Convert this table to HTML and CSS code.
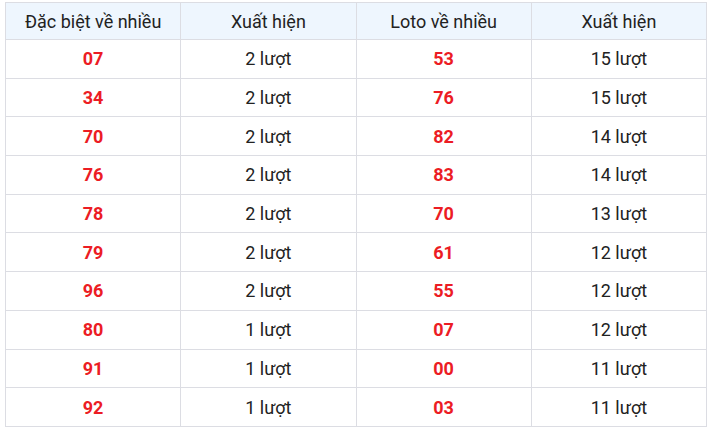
FILE: index.html
```html
<!DOCTYPE html>
<html lang="vi">
<head>
<meta charset="utf-8">
<link rel="stylesheet" href="styles.css">
</head>
<body>
<table class="stats">
  <thead>
    <tr><th>Đặc biệt về nhiều</th><th>Xuất hiện</th><th>Loto về nhiều</th><th>Xuất hiện</th></tr>
  </thead>
  <tbody>
    <tr><td class="num">07</td><td>2 lượt</td><td class="num">53</td><td>15 lượt</td></tr>
    <tr><td class="num">34</td><td>2 lượt</td><td class="num">76</td><td>15 lượt</td></tr>
    <tr><td class="num">70</td><td>2 lượt</td><td class="num">82</td><td>14 lượt</td></tr>
    <tr><td class="num">76</td><td>2 lượt</td><td class="num">83</td><td>14 lượt</td></tr>
    <tr><td class="num">78</td><td>2 lượt</td><td class="num">70</td><td>13 lượt</td></tr>
    <tr><td class="num">79</td><td>2 lượt</td><td class="num">61</td><td>12 lượt</td></tr>
    <tr><td class="num">96</td><td>2 lượt</td><td class="num">55</td><td>12 lượt</td></tr>
    <tr><td class="num">80</td><td>1 lượt</td><td class="num">07</td><td>12 lượt</td></tr>
    <tr><td class="num">91</td><td>1 lượt</td><td class="num">00</td><td>11 lượt</td></tr>
    <tr><td class="num">92</td><td>1 lượt</td><td class="num">03</td><td>11 lượt</td></tr>
  </tbody>
</table>
</body>
</html>
```
FILE: styles.css
```css
html, body {
  margin: 0;
  padding: 0;
  background: #ffffff;
}
body {
  padding: 2px 9px 0 5px;
  font-family: Roboto, "Liberation Sans", Arial, sans-serif;
  color: #222222;
}
.stats {
  width: 702px;
  border-collapse: collapse;
  table-layout: fixed;
  font-size: 18px;
}
.stats th,
.stats td {
  border: 1px solid #dcdde3;
  text-align: center;
  padding: 0;
}
.stats th {
  height: 36px;
  background: #eef6fe;
  font-weight: 400;
  color: #222222;
}
.stats td {
  height: 37.7px;
}
.stats td.num {
  color: #ec1c24;
  font-weight: 700;
  font-size: 18px;
}
```
